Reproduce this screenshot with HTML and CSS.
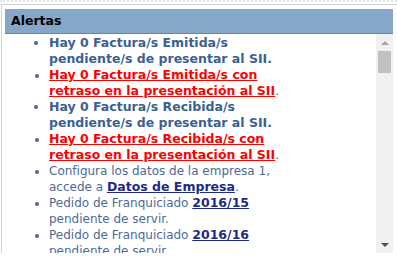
FILE: index.html
```html
<!DOCTYPE html>
<html lang="es">

<head>
    <meta charset="UTF-8">
    <title>Alertas</title>
    <link rel="stylesheet" href="styles.css">
</head>

<body>
    <div class="top-rule"></div>
    <div class="panel">
        <div class="panel-title">Alertas</div>
        <div class="panel-body">
            <div class="alerts">
                <ul>
                    <li class="info">Hay 0 Factura/s Emitida/s pendiente/s de presentar al SII.</li>
                    <li><a class="late" href="#">Hay 0 Factura/s Emitida/s con retraso en la presentación al SII</a>.</li>
                    <li class="info">Hay 0 Factura/s Recibida/s pendiente/s de presentar al SII.</li>
                    <li><a class="late" href="#">Hay 0 Factura/s Recibida/s con retraso en la presentación al SII</a>.</li>
                    <li>Configura los datos de la empresa 1, accede a <a href="#">Datos de Empresa</a>.</li>
                    <li>Pedido de Franquiciado <a href="#">2016/15</a> pendiente de servir.</li>
                    <li>Pedido de Franquiciado <a href="#">2016/16</a> pendiente de servir.</li>
                    <li>Pedido de Franquiciado <a href="#">2016/17</a> pendiente de servir.</li>
                </ul>
            </div>
            <div class="scrollbar">
                <div class="scroll-btn"><span class="arrow-up"></span></div>
                <div class="scroll-thumb"></div>
                <div class="scroll-track"></div>
                <div class="scroll-btn"><span class="arrow-down"></span></div>
            </div>
        </div>
    </div>
</body>
</html>
```

FILE: styles.css
```css
body {
    margin: 0;
    font-family: "DejaVu Sans", Verdana, sans-serif;
    background-color: #ffffff;
}

.top-rule {
    height: 2px;
    border-top: 2px dotted #e4e4e4;
}

.panel {
    margin-left: 1px;
    border-top: 1px solid #d4d4d4;
    border-left: 1px solid #d4d4d4;
    padding: 4px 4px 0 3px;
}

.panel-title {
    height: 24px;
    line-height: 24px;
    padding-left: 6px;
    background-color: #87a7c9;
    border-bottom: 1px solid #7a7f88;
    font-size: 12.5px;
    font-weight: bold;
    color: #000000;
}

.panel-body {
    display: flex;
    height: 219px;
}

.alerts {
    flex: 1;
    overflow: hidden;
}

.alerts ul {
    margin: 1px 0 0 0;
    padding: 0 85px 0 44px;
    font-size: 12px;
    line-height: 16px;
    color: #4c6a98;
}

.alerts li::marker {
    color: #4a6796;
}

.alerts li.info {
    font-size: 12.5px;
    font-weight: bold;
    color: #3c5f92;
}

.alerts a {
    font-size: 12.5px;
    color: #1e2a8a;
    font-weight: bold;
}

.alerts a.late {
    color: #ff0000;
}

/* barra de scroll dibujada */
.scrollbar {
    width: 17px;
    display: flex;
    flex-direction: column;
    background-color: #f1f1f1;
}

.scroll-btn {
    height: 17px;
    display: flex;
    align-items: center;
    justify-content: center;
}

.arrow-up {
    border-left: 4px solid transparent;
    border-right: 4px solid transparent;
    border-bottom: 4px solid #a3a3a3;
}

.arrow-down {
    border-left: 4px solid transparent;
    border-right: 4px solid transparent;
    border-top: 4px solid #505050;
}

.scroll-thumb {
    height: 22px;
    margin: 0 2px;
    background-color: #c1c1c1;
}

.scroll-track {
    flex: 1;
}
```
